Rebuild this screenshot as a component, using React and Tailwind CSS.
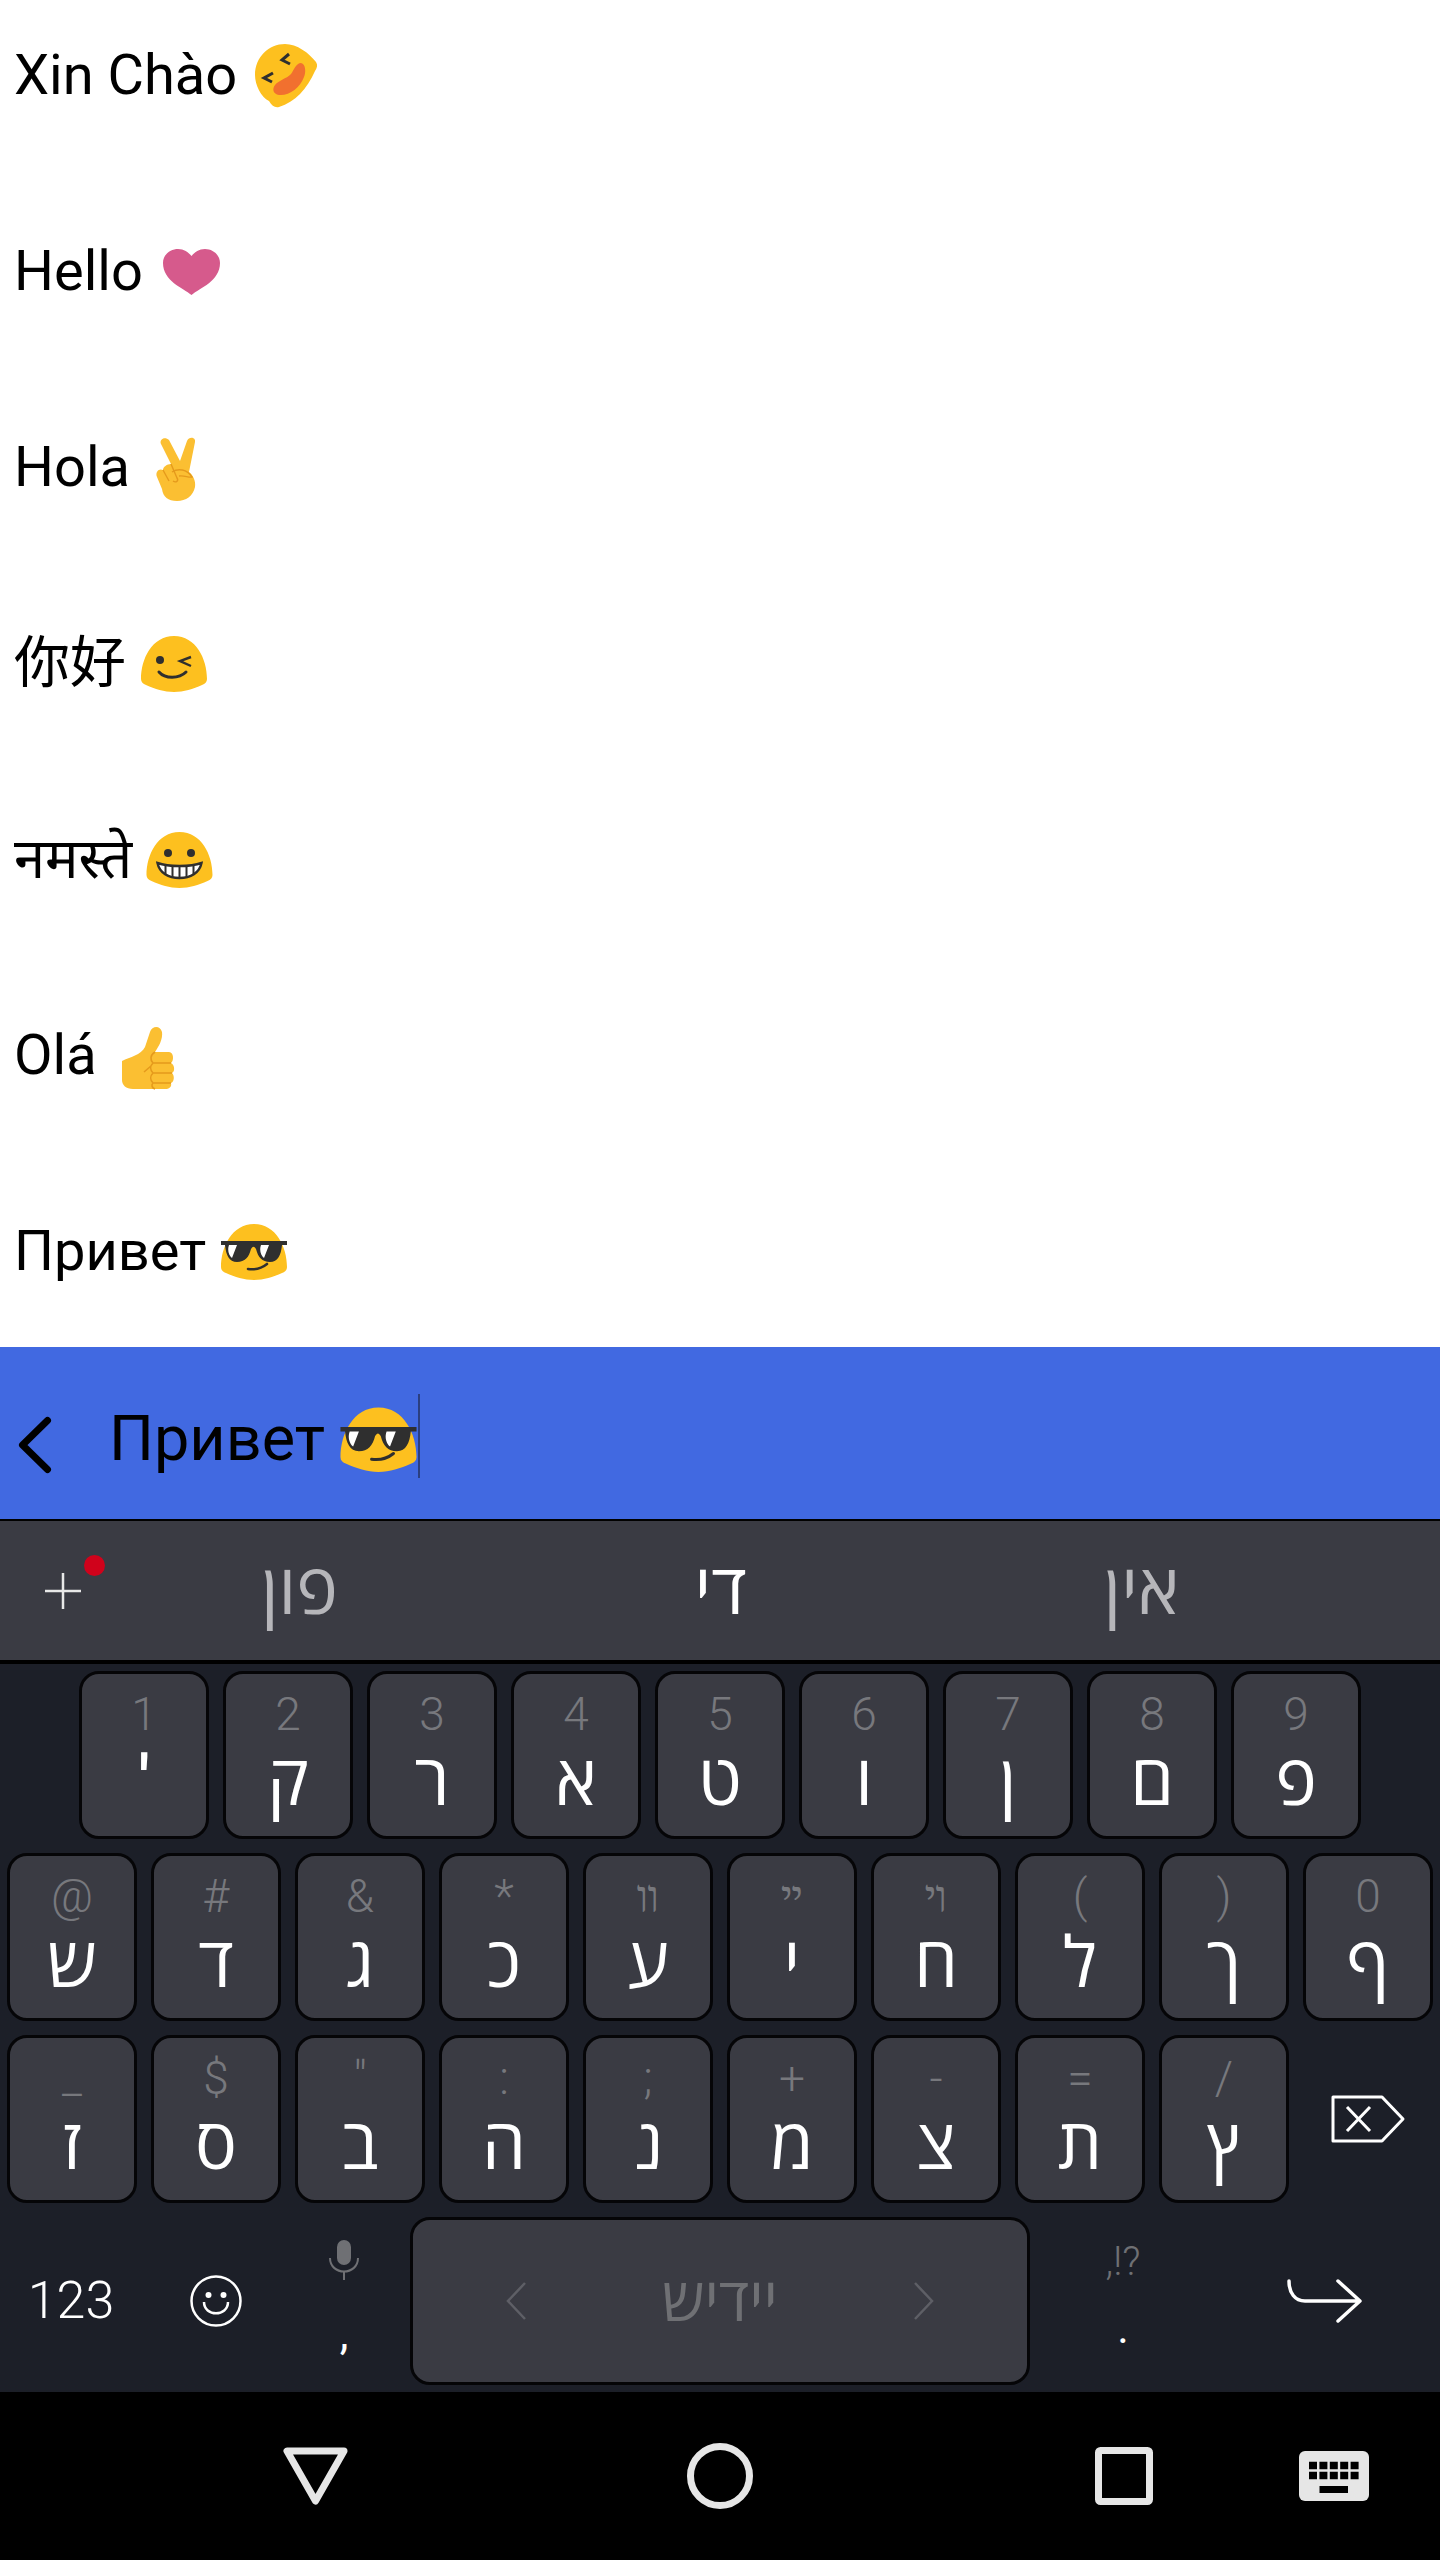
import React from "react";

const dome = "M36,9 C58,9 69,32 69,52 C69,55 67,57 64,58 C55,62 46,65 36,65 C26,65 17,62 8,58 C5,57 3,55 3,52 C3,32 14,9 36,9Z";

const Laugh = ({ className }) => (
    <svg viewBox="0 0 72 72" className={className}>
        <path fill="#FDC01F" d="M36,5 C48,5 60,14 67,23 C69,26 68,29 66,32 C58,50 46,63 30,68 C26,69 23,67 20,62 C12,58 6,46 6,36 C6,18 20,5 36,5Z" />
        <path fill="#F1702F" d="M52,24 C57,25 57,34 55,38 C51,49 40,57 30,56 C24,55 23,50 26,46 C30,41 37,40 42,35 C45,31 47,24 52,24Z" />
        <path fill="none" stroke="#2f2f2f" strokeWidth="3" d="M40,15 L33,21 L41,25 M24,34 L15,39 L23,43" />
    </svg>
);

const Heart = ({ className }) => (
    <svg viewBox="0 0 72 72" className={className}>
        <path fill="#D65A8C" d="M36.5,60 C28,53 8,46 8,28 C8,19 16,14 23,14 C29,14 33,17 36.5,21 C40,17 44,14 50,14 C58,14 65,20 65,28 C65,46 45,53 36.5,60Z" />
    </svg>
);

const Victory = ({ className }) => (
    <svg viewBox="0 0 72 72" className={className}>
        <path fill="#FBBF32" d="M19,13 C17,8 23,5 27,9 L38,30 L45,10 C47,5 54,6 53,11 L47,41 C51,44 54,50 53,56 C51,65 44,70 35,70 C26,70 21,66 20,58 L15,46 C13,41 17,37 21,39 C21,36 25,33 29,33 Z" />
        <path fill="none" stroke="#E59A1C" strokeWidth="1.4" d="M21,39 L27,50 M29,33 L35,47 C37,50 34,52 31,50 M30,41 C36,37 45,38 50,46 C47,47 42,44 37,45" />
    </svg>
);

const Wink = ({ className }) => (
    <svg viewBox="0 0 72 72" className={className}>
        <path fill="#FDC01F" d={dome} />
        <circle cx="22" cy="33" r="4" fill="#2f2f2f" />
        <path fill="none" stroke="#2f2f2f" strokeWidth="2.4" d="M53,30 L42,34 L53,39" />
        <path fill="none" stroke="#2f2f2f" strokeWidth="3" strokeLinecap="round" d="M21,45 C27,52 41,52 48,45" />
    </svg>
);

const Grin = ({ className }) => (
    <svg viewBox="0 0 72 72" className={className}>
        <g transform="translate(-0.5 0)">
            <path fill="#FDC01F" d={dome} />
            <circle cx="24.5" cy="30" r="4" fill="#2f2f2f" />
            <circle cx="47.5" cy="30" r="4" fill="#2f2f2f" />
            <path fill="#fff" stroke="#2f2f2f" strokeWidth="2.4" d="M14,40 C25,44 47,44 58,40 C56,50 47,55 36,55 C25,55 16,50 14,40Z" />
            <path stroke="#2f2f2f" strokeWidth="2" d="M22,43 V52 M29,43 V55 M36,43 V55 M43,43 V55 M50,43 V52" />
        </g>
    </svg>
);

const Thumb = ({ className }) => (
    <svg viewBox="0 0 72 72" className={className}>
        <path fill="#FBBF32" d="M41,13 C43,7 51,6 53,13 C54,20 50,27 46,33 L60,33 C65,33 65,42 62,44 C66,46 66,53 63,54 C66,57 65,63 62,64 C63,68 60,70 56,70 L24,70 C17,70 13,66 13,61 L13,42 C21,38 32,36 36,28 Z" />
        <path fill="none" stroke="#E59A1C" strokeWidth="1.6" d="M46,33 C41,36 41,41 44,44 L62,44 M44,44 C41,47 41,51 44,54 L63,54 M44,54 C41,57 41,61 44,64 L62,64 M44,64 C42,66 43,69 46,70 M42,47 L35,53" />
    </svg>
);

const Cool = ({ className }) => (
    <svg viewBox="0 0 72 72" className={className}>
        <path fill="#FDC01F" d={dome} />
        <path fill="#2f2f2f" d="M3,26 L69,26 L69,30 L64,30 C63,40 60,47 52,47 C44,47 40,42 38,34 C36,31 35,31 33,34 C31,42 27,47 19,47 C11,47 8,40 7,30 L3,30Z" />
        <path fill="#fff" d="M11,30 L19,30 L14,43 C11,41 9,35 11,30Z M43,30 L51,30 L46,43 C43,41 41,35 43,30Z" />
        <path fill="none" stroke="#2f2f2f" strokeWidth="2.6" strokeLinecap="round" d="M30,54 C37,55 44,53 49,49" />
    </svg>
);

const rows = [
    ["Xin Chào", Laugh],
    ["Hello", Heart],
    ["Hola", Victory],
    ["你好", Wink],
    ["नमस्ते", Grin],
    ["Olá", Thumb],
    ["Привет", Cool],
];

const row1 = [["1", "'"], ["2", "ק"], ["3", "ר"], ["4", "א"], ["5", "ט"], ["6", "ו"], ["7", "ן"], ["8", "ם"], ["9", "פ"]];
const row2 = [["@", "ש"], ["#", "ד"], ["&", "ג"], ["*", "כ"], ["װ", "ע"], ["ײ", "י"], ["ױ", "ח"], ["(", "ל"], [")", "ך"], ["0", "ף"]];
const row3 = [["_", "ז"], ["$", "ס"], ['"', "ב"], [":", "ה"], [";", "נ"], ["+", "מ"], ["-", "צ"], ["=", "ת"], ["/", "ץ"]];

const Key = ({ label, letter }) => (
    <div className="w-[130px] h-[168px] shrink-0 rounded-[20px] border-[3px] border-[#050507] bg-[#3a3b43] flex flex-col items-center pt-[15px]">
        <span className="h-[50px] text-[46px] leading-[50px] font-light text-[#77787d]">{label}</span>
        <span className="mt-[12px] h-[60px] text-[70px] leading-[60px] font-medium text-white">{letter}</span>
    </div>
);

export default function App() {
    return (
        <div className="w-[1440px] h-[2560px] overflow-hidden bg-white font-['Roboto','Open_Sans','Noto_Sans_CJK_SC','Noto_Sans_Devanagari','sans-serif']">
            {/* message list */}
            <div className="h-[1347px] overflow-hidden">
                <div className="-mt-[23px]">
                    {rows.map(([text, Emoji]) => (
                        <div key={text} className="h-[196px] flex items-center pl-[14px] text-[56px] text-black">
                            <span className="whitespace-pre">{text} </span>
                            <Emoji className="w-[72px] h-[72px] shrink-0 -ml-[2px]" />
                        </div>
                    ))}
                </div>
            </div>

            {/* input bar */}
            <div className="h-[172px] bg-[#4169e1] flex items-center">
                <svg viewBox="0 0 40 64" className="w-[40px] h-[64px] ml-[15px] mt-[24px]">
                    <path d="M32.5,7.5 L7.5,32 L32.5,56.5" fill="none" stroke="#000" strokeWidth="7" strokeLinecap="round" strokeLinejoin="round" />
                </svg>
                <span className="ml-[54px] mt-[12px] text-[63px] text-black whitespace-pre">Привет </span>
                <Cool className="w-[83px] h-[83px] shrink-0 -ml-[4px] mt-[10px]" />
                <div className="w-[2px] h-[84px] bg-[#2b3f80] -ml-[2px] mt-[6px]" />
            </div>

            {/* suggestions */}
            <div className="h-[145px] border-t-2 border-b-4 border-black bg-[#3a3b43] flex items-center relative">
                <svg viewBox="0 0 36 36" className="w-[36px] h-[36px] ml-[45px] shrink-0">
                    <path d="M18,0 V36 M0,18 H36" stroke="#e8e8e8" strokeWidth="2.5" />
                </svg>
                <div className="absolute left-[84px] top-[34px] w-[21px] h-[21px] rounded-full bg-[#d0021b]" />
                <div className="ml-[8px] flex text-[70px] font-medium">
                    <span className="w-[421px] text-center text-[#b6b6ba]">פון</span>
                    <span className="w-[421px] text-center text-white">די</span>
                    <span className="w-[421px] text-center text-[#b6b6ba]">אין</span>
                </div>
            </div>

            {/* keyboard */}
            <div className="h-[728px] bg-[#1c1f28] pt-[7px] flex flex-col gap-[14px]">
                <div className="flex gap-[14px] pl-[79px]">
                    {row1.map(([l, k]) => <Key key={l} label={l} letter={k} />)}
                </div>
                <div className="flex gap-[14px] pl-[7px]">
                    {row2.map(([l, k]) => <Key key={l} label={l} letter={k} />)}
                </div>
                <div className="flex gap-[14px] pl-[7px] items-center">
                    {row3.map(([l, k]) => <Key key={l} label={l} letter={k} />)}
                    <svg viewBox="0 0 76 48" className="w-[76px] h-[48px] ml-[27px]">
                        <path d="M3,2 H52 L73,24 L52,46 H3 Z" fill="none" stroke="#fff" strokeWidth="3" strokeLinejoin="round" />
                        <path d="M17,12 L40,36 M40,12 L17,36" stroke="#fff" strokeWidth="3" />
                    </svg>
                </div>
                <div className="flex items-center h-[168px]">
                    <span className="w-[142px] text-center text-[52px] font-light text-white">123</span>
                    <svg viewBox="0 0 52 52" className="w-[52px] h-[52px] ml-[48px]">
                        <circle cx="26" cy="26" r="24.5" fill="none" stroke="#fff" strokeWidth="2.5" />
                        <circle cx="18.5" cy="20" r="3" fill="#fff" />
                        <circle cx="33.5" cy="20" r="3" fill="#fff" />
                        <path d="M14,27 C14,42 38,42 38,27" fill="none" stroke="#fff" strokeWidth="2.5" />
                    </svg>
                    <div className="w-[132px] h-[168px] flex flex-col items-center ml-[36px]">
                        <svg viewBox="0 0 30 40" className="w-[30px] h-[40px] mt-[23px]">
                            <rect x="8" y="0" width="14" height="25" rx="7" fill="#6f7074" />
                            <path d="M1,18 C1,36 29,36 29,18 M15,31 V40" fill="none" stroke="#6f7074" strokeWidth="2" />
                        </svg>
                        <span className="mt-[32px] text-[44px] leading-[44px] text-white">,</span>
                    </div>
                    <div className="w-[620px] h-[168px] rounded-[20px] border-[3px] border-[#050507] bg-[#3a3b43] flex items-center justify-between pl-[93px] pr-[93px]">
                        <svg viewBox="0 0 20 38" className="w-[20px] h-[38px]">
                            <path d="M19,1 L2,19 L19,37" fill="none" stroke="#5e5f66" strokeWidth="2.5" />
                        </svg>
                        <span className="text-[60px] font-medium text-[#6f7074]">יידיש</span>
                        <svg viewBox="0 0 20 38" className="w-[20px] h-[38px]">
                            <path d="M1,1 L18,19 L1,37" fill="none" stroke="#5e5f66" strokeWidth="2.5" />
                        </svg>
                    </div>
                    <div className="w-[186px] h-[168px] flex flex-col items-center">
                        <span className="mt-[23px] text-[40px] leading-[44px] font-light text-[#6f7074]">,!?</span>
                        <span className="mt-[22px] text-[44px] leading-[44px] text-white">.</span>
                    </div>
                    <svg viewBox="0 0 76 44" className="w-[76px] h-[44px] ml-[71px]">
                        <path d="M2,2 C2,14 8,22 18,22 H72 M51,2 L73,22 L51,42" fill="none" stroke="#fff" strokeWidth="3.5" strokeLinecap="round" strokeLinejoin="round" />
                    </svg>
                </div>
            </div>

            {/* nav bar */}
            <div className="h-[168px] bg-black flex items-center pl-[283px]">
                <svg viewBox="0 0 65 58" className="w-[65px] h-[58px] shrink-0">
                    <path d="M4,4 H61 L32.5,54 Z" fill="none" stroke="#e6e6e6" strokeWidth="7" strokeLinejoin="round" />
                </svg>
                <svg viewBox="0 0 66 66" className="w-[66px] h-[66px] ml-[339px] shrink-0">
                    <circle cx="33" cy="33" r="29.5" fill="none" stroke="#e6e6e6" strokeWidth="7" />
                </svg>
                <svg viewBox="0 0 58 58" className="w-[58px] h-[58px] ml-[342px] shrink-0">
                    <rect x="3.5" y="3.5" width="51" height="51" rx="2" fill="none" stroke="#e6e6e6" strokeWidth="7" />
                </svg>
                <svg viewBox="0 0 70 50" className="w-[70px] h-[50px] ml-[146px] shrink-0">
                    <rect width="70" height="50" rx="6" fill="#e6e6e6" />
                    <path d="M10,14.5 h8 M20.4,14.5 h8 M30.8,14.5 h8 M41.2,14.5 h8 M51.6,14.5 h8 M10,24.5 h8 M20.4,24.5 h8 M30.8,24.5 h8 M41.2,24.5 h8 M51.6,24.5 h8" stroke="#000" strokeWidth="7.5" />
                    <rect x="20.5" y="35" width="28.5" height="7" fill="#000" />
                </svg>
            </div>
        </div>
    );
}
